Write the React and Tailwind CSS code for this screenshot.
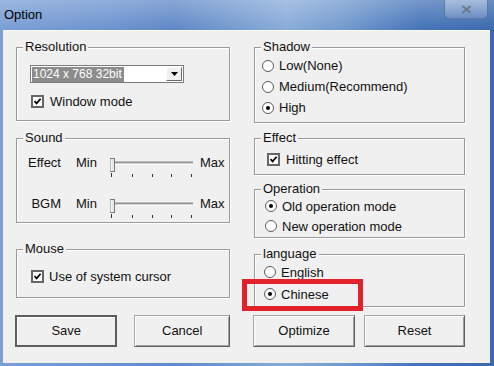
import React from 'react';

const FONT = "font-['Liberation_Sans',Arial,sans-serif]";

function Group({ label, className = '', children }) {
  return (
    <div className={`relative border border-[#9a9a9a] shadow-[inset_1px_1px_0_#fff,1px_1px_0_#fff] ${className}`}>
      <span className="absolute -top-[9px] left-[6px] px-[2px] bg-[#f0f0f0] leading-[15px] text-[13px]">{label}</span>
      {children}
    </div>
  );
}

function CheckBox() {
  return (
    <span className="w-[13px] h-[13px] shrink-0 border-2 border-[#666] bg-white flex items-center justify-center">
      <svg width="9" height="9" viewBox="0 0 9 9">
        <path d="M1.5 4.2 L3.6 6.4 L7.6 1.8" fill="none" stroke="#000" strokeWidth="1.7" />
      </svg>
    </span>
  );
}

function Radio({ checked }) {
  return (
    <span className="w-[12px] h-[12px] shrink-0 rounded-full border-[1.5px] border-[#5c5c5c] bg-white flex items-center justify-center">
      {checked && <span className="w-[4px] h-[4px] rounded-full bg-black" />}
    </span>
  );
}

function Slider() {
  const ticks = [1, 22, 42, 61, 81];
  return (
    <svg width="86" height="20" viewBox="0 0 86 20" className="shrink-0 mt-[3px]">
      <rect x="3" y="3.5" width="80" height="1" fill="#8a8a8a" />
      <rect x="3" y="4.5" width="80" height="1" fill="#6a6a6a" />
      <rect x="3" y="5.5" width="80" height="1" fill="#ffffff" />
      <rect x="0.5" y="0.5" width="4" height="13" fill="#e8e8e8" stroke="#7a7a7a" />
      <line x1="1" y1="1" x2="1" y2="13" stroke="#fff" />
      {ticks.map((t, i) => (
        <rect key={t} x={t} y={i === 0 ? 15 : 16} width="1" height={i === 0 ? 4 : 3} fill="#333" />
      ))}
    </svg>
  );
}

function Btn({ children, primary, className = '' }) {
  return (
    <div
      className={`h-[32px] flex items-center justify-center text-[13px] bg-[#f0f0f0] ${
        primary
          ? 'border-2 border-[#5e5e5e] shadow-[inset_1px_1px_0_#fff]'
          : 'border border-[#a5a5a5] border-r-[#5f5f5f] border-b-[#5f5f5f] shadow-[inset_1px_1px_0_#fff,inset_-1px_-1px_0_#a0a0a0]'
      } ${className}`}
    >
      {children}
    </div>
  );
}

export default function App() {
  return (
    <div className={`relative w-[494px] h-[366px] overflow-hidden ${FONT} text-[#111] bg-[linear-gradient(90deg,#7a9ed5_0%,#6c93cf_22%,#5f88c6_35%,#88abd9_58%,#7098cd_70%,#4474b8_85%,#3a69ae_100%)]`}>
      <div className="absolute inset-x-0 top-0 h-[30px] bg-gradient-to-b from-white/25 to-transparent" />

      {/* title bar */}
      <div className="relative h-[30px] flex items-center pl-[4px] text-[13px] text-black">Option</div>
      <div className="absolute top-[-1px] right-[6px] w-[44px] h-[20px] rounded-b-[5px] border border-[#46638f]/70 bg-gradient-to-b from-white/40 to-white/15 flex items-center justify-center">
        <svg width="11" height="9" viewBox="0 0 11 9">
          <path d="M1.5 1 L9.5 8 M9.5 1 L1.5 8" stroke="#6d7a8c" strokeWidth="2.2" />
        </svg>
      </div>

      {/* client area */}
      <div className="ml-[3px] mr-[4px] h-[333px] bg-[#f0f0f0] border-t border-[#fafafa] flex pl-[13px] pt-[16px]">
        {/* left column */}
        <div className="w-[214px] flex flex-col">
          <Group label="Resolution" className="h-[74px] pl-[13px] pt-[17px]">
            <div className="w-[154px] h-[18px] bg-white border border-[#7a7a7a] flex items-center pl-[1px] pr-[1px]">
              <span className="h-[15px] bg-[#8c8c8c] text-white text-[12px] leading-[15px] pl-[1px] pr-[2px]">1024 x 768 32bit</span>
              <span className="ml-auto w-[16px] h-[14px] bg-[#f0f0f0] border border-[#fff] border-r-[#6a6a6a] border-b-[#6a6a6a] flex items-center justify-center">
                <svg width="7" height="4" viewBox="0 0 7 4"><path d="M0 0 H7 L3.5 4 Z" fill="#000" /></svg>
              </span>
            </div>
            <div className="mt-[11px] ml-[1px] flex items-center gap-[6px] h-[15px] text-[13px] leading-[15px]">
              <CheckBox />
              <span>Window mode</span>
            </div>
          </Group>

          <Group label="Sound" className="mt-[17px] h-[85px] pl-[10px] pt-[16px]">
            {['Effect', 'BGM'].map((name, i) => (
              <div key={name} className={`flex items-start text-[13px] leading-[15px] ${i ? 'mt-[18px]' : ''}`}>
                <span className="w-[35px] text-right pr-[1px]">{name}</span>
                <span className="w-[48px] pl-[14px]">Min</span>
                <Slider />
                <span className="ml-[4px]">Max</span>
              </div>
            ))}
          </Group>

          <Group label="Mouse" className="mt-[26px] h-[49px] pl-[14px] pt-[19px]">
            <div className="flex items-center gap-[5px] h-[15px] text-[13px] leading-[15px]">
              <CheckBox />
              <span>Use of system cursor</span>
            </div>
          </Group>

          <div className="mt-[17px] -ml-[1px] flex gap-[17px]">
            <Btn primary className="w-[103px]">Save</Btn>
            <Btn className="w-[96px]">Cancel</Btn>
          </div>
        </div>

        {/* right column */}
        <div className="ml-[24px] w-[211px] flex flex-col">
          <Group label="Shadow" className="h-[76px] pl-[7px] pt-[7px]">
            {[['Low(None)', false], ['Medium(Recommend)', false], ['High', true]].map(([t, c]) => (
              <div key={t} className="h-[21px] flex items-center gap-[5px] text-[13px] leading-[15px]">
                <Radio checked={c} />
                <span>{t}</span>
              </div>
            ))}
          </Group>

          <Group label="Effect" className="mt-[15px] h-[37px] pl-[12px] pt-[13px]">
            <div className="flex items-center gap-[6px] h-[15px] text-[13px] leading-[15px]">
              <CheckBox />
              <span>Hitting effect</span>
            </div>
          </Group>

          <Group label="Operation" className="mt-[14px] h-[49px] pl-[10px] pt-[6px]">
            {[['Old operation mode', true], ['New operation mode', false]].map(([t, c]) => (
              <div key={t} className="h-[20px] flex items-center gap-[5px] text-[13px] leading-[15px]">
                <Radio checked={c} />
                <span>{t}</span>
              </div>
            ))}
          </Group>

          <Group label="language" className="mt-[16px] h-[53px] pl-[9px] pt-[6px]">
            {[['English', false], ['Chinese', true]].map(([t, c]) => (
              <div key={t} className="h-[22px] flex items-center gap-[5px] text-[13px] leading-[15px]">
                <Radio checked={c} />
                <span>{t}</span>
              </div>
            ))}
          </Group>

          <div className="mt-[8px] -ml-[1px] flex gap-[9px]">
            <Btn className="w-[103px]">Optimize</Btn>
            <Btn className="w-[102px]">Reset</Btn>
          </div>
        </div>
      </div>

      {/* red highlight annotation */}
      <div className="absolute left-[242px] top-[279px] w-[121px] h-[32px] border-[5px] border-[#e1222b]" />
    </div>
  );
}
